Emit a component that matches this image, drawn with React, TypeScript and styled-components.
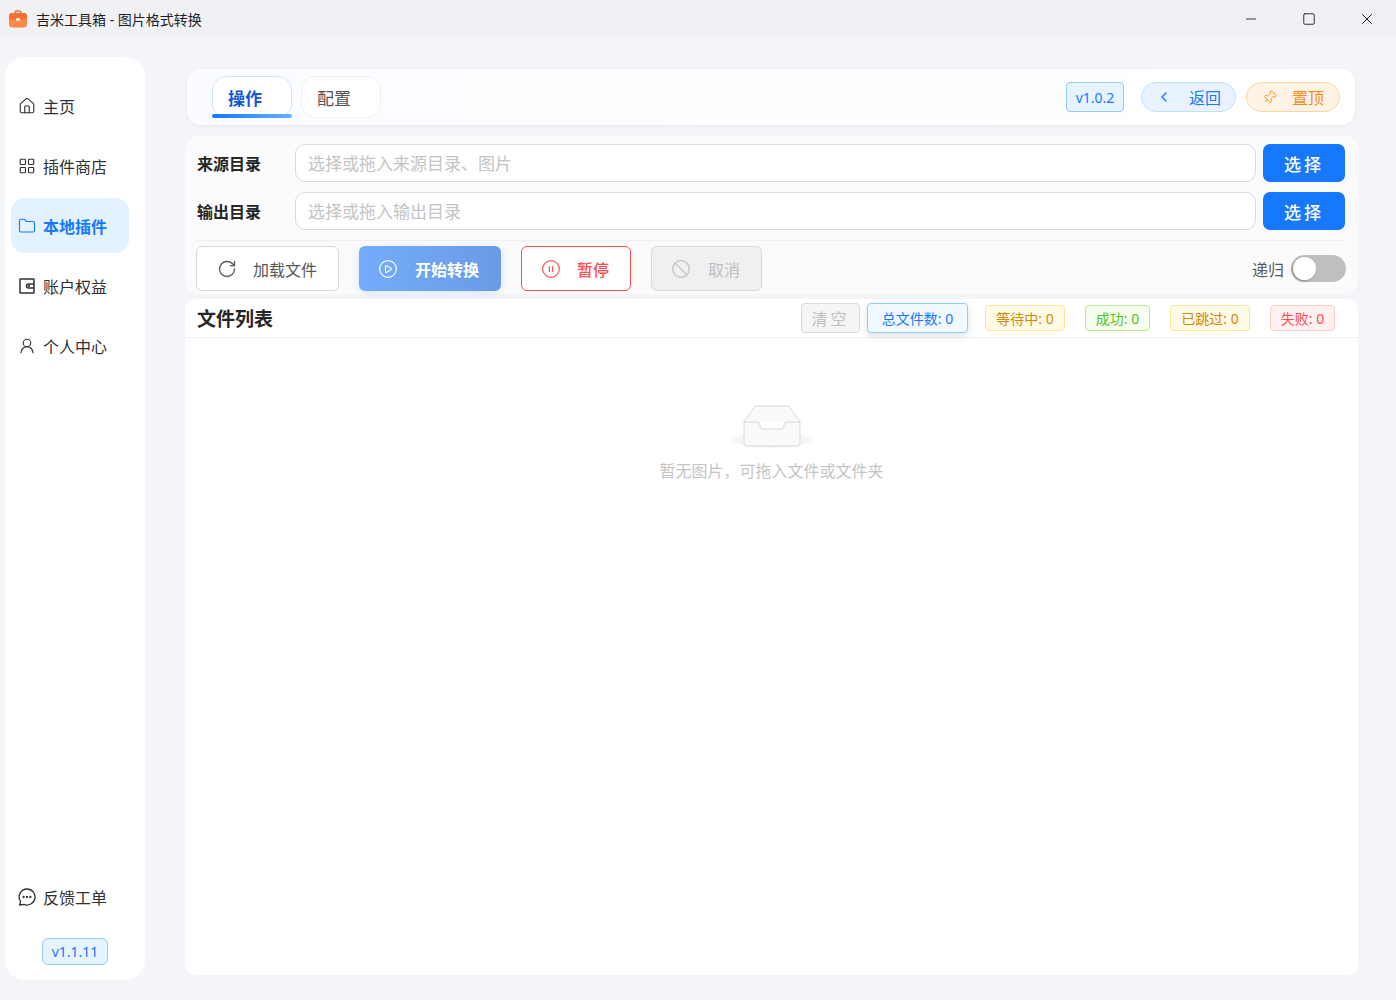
import React from 'react';
import styled, { createGlobalStyle, css } from 'styled-components';
import {
    Ban,
    ChevronLeft,
    CirclePause,
    CirclePlay,
    Folder,
    House,
    LayoutGrid,
    Minus,
    Pin,
    RotateCw,
    Square,
    UserRound,
    X,
} from 'lucide-react';

const GlobalStyle = createGlobalStyle`
    html, body {
        margin: 0;
        padding: 0;
        background: #f4f5f8;
    }
    body {
        font-family: "Noto Sans", "Noto Sans CJK SC", sans-serif;
        color: #303133;
    }
    * {
        box-sizing: border-box;
    }
`;

const Window = styled.div`
    width: 1396px;
    height: 1000px;
    display: flex;
    flex-direction: column;
    overflow: hidden;
    background: #f4f5f8;
`;

const TitleBar = styled.div`
    height: 37px;
    flex: none;
    display: flex;
    align-items: center;
    padding-left: 9px;
    background: #eff1f5;
`;

const AppTitle = styled.span`
    margin-left: 9px;
    font-size: 14px;
    color: #1f1f1f;
`;

const WindowButtons = styled.div`
    margin-left: auto;
    display: flex;
    align-items: center;
    color: #1a1a1a;
`;

const WindowButton = styled.div`
    width: 58px;
    height: 36px;
    display: flex;
    align-items: center;
    justify-content: center;
`;

const Body = styled.div`
    flex: 1;
    min-height: 0;
    display: flex;
    padding: 20px 38px 20px 5px;
`;

const Sidebar = styled.nav`
    width: 140px;
    flex: none;
    display: flex;
    flex-direction: column;
    padding: 21px 16px 15px 6px;
    border-radius: 20px;
    background: #fff;
`;

const NavItem = styled.div<{ $active?: boolean }>`
    height: 55px;
    margin-bottom: 5px;
    display: flex;
    align-items: center;
    gap: 7px;
    padding-left: 7px;
    border-radius: 14px;
    font-size: 16px;
    color: #303133;
    ${(props) =>
        props.$active &&
        css`
            background: #e4f2ff;
            color: #1677ff;
            font-weight: 700;
        `}
`;

const BottomNav = styled.div`
    margin-top: auto;
    display: flex;
    flex-direction: column;
    align-items: stretch;
`;

const SideVersion = styled.div`
    align-self: center;
    margin: 9px 0 0 10px;
    width: 66px;
    height: 27px;
    display: flex;
    align-items: center;
    justify-content: center;
    border: 1px solid #91caff;
    border-radius: 6px;
    background: #e6f4ff;
    color: #1677ff;
    font-size: 14px;
`;

const Main = styled.main`
    flex: 1;
    min-width: 0;
    margin-left: 40px;
    display: flex;
    flex-direction: column;
`;

const Header = styled.header`
    height: 56px;
    margin: 12px 3px 0 2px;
    flex: none;
    display: flex;
    align-items: center;
    padding: 0 15px 0 25px;
    border-radius: 14px;
    background: linear-gradient(90deg, #fbfcff, #ffffff);
    box-shadow: 0 1px 4px rgba(0, 0, 0, 0.06);
`;

const Tab = styled.div<{ $active?: boolean }>`
    position: relative;
    width: 80px;
    height: 42px;
    margin-right: 9px;
    display: flex;
    align-items: center;
    padding-left: 15px;
    border-radius: 14px;
    font-size: 17px;
    background: #fff;
    border: 1px solid ${(props) => (props.$active ? '#cfe2ff' : '#f0f0f0')};
    color: ${(props) => (props.$active ? '#1558d6' : '#555')};
    font-weight: ${(props) => (props.$active ? 700 : 400)};
    ${(props) =>
        props.$active &&
        css`
            &::after {
                content: '';
                position: absolute;
                left: -1px;
                right: -1px;
                bottom: -1px;
                height: 4px;
                border-radius: 2px;
                background: linear-gradient(90deg, #1677ff, #69b1ff);
            }
        `}
`;

const HeaderRight = styled.div`
    margin-left: auto;
    display: flex;
    align-items: center;
`;

const HeaderVersion = styled.div`
    width: 58px;
    height: 30px;
    margin-right: 17px;
    display: flex;
    align-items: center;
    justify-content: center;
    border: 1px solid #91caff;
    border-radius: 4px;
    background: #e6f4ff;
    color: #1677ff;
    font-size: 14px;
`;

const PillButton = styled.div<{ $tone: 'blue' | 'orange' }>`
    height: 30px;
    display: flex;
    align-items: center;
    border-radius: 15px;
    font-size: 16px;
    ${(props) =>
        props.$tone === 'blue'
            ? css`
                  width: 95px;
                  margin-right: 10px;
                  padding-left: 14px;
                  gap: 17px;
                  border: 1px solid #bfdfff;
                  background: #e8f3ff;
                  color: #1677ff;
              `
            : css`
                  width: 94px;
                  padding-left: 15px;
                  gap: 15px;
                  border: 1px solid #ffd59a;
                  background: #fff3e6;
                  color: #fa8c16;
              `}
`;

const SourceCard = styled.section`
    height: 158px;
    margin-top: 11px;
    flex: none;
    display: flex;
    flex-direction: column;
    padding: 8px 13px 0 12px;
    border-radius: 14px;
    background: #fbfbfb;
`;

const PathRow = styled.div`
    height: 38px;
    margin-bottom: 10px;
    display: flex;
    align-items: center;
`;

const PathLabel = styled.div`
    width: 98px;
    flex: none;
    font-size: 16px;
    font-weight: 700;
    color: #262626;
`;

const PathInput = styled.input`
    flex: 1;
    min-width: 0;
    height: 38px;
    padding: 0 12px;
    border: 1px solid #d9d9d9;
    border-radius: 10px;
    background: #fff;
    outline: none;
    font-family: inherit;
    font-size: 17px;
    &::placeholder {
        color: #c4c4c4;
    }
`;

const SelectButton = styled.button`
    width: 82px;
    height: 38px;
    margin-left: 7px;
    border: none;
    border-radius: 7px;
    background: #1677ff;
    color: #fff;
    font-family: inherit;
    font-size: 17px;
    font-weight: 500;
    letter-spacing: 3px;
`;

const ActionRow = styled.div`
    margin: 0 -1px;
    padding-top: 5px;
    border-top: 1px solid #f0f0f0;
    display: flex;
    align-items: center;
`;

const actionTones = {
    plain: css`
        width: 143px;
        border: 1px solid #d9d9d9;
        background: #fff;
        color: #595959;
        padding-left: 20px;
        gap: 16px;
    `,
    primary: css`
        width: 142px;
        background: linear-gradient(90deg, #74acfb, #6a9be6);
        color: #fff;
        font-weight: 700;
        padding-left: 19px;
        gap: 17px;
        box-shadow: 0 2px 8px rgba(22, 119, 255, 0.16);
    `,
    danger: css`
        width: 110px;
        border: 1px solid #ff4d4f;
        background: #fff;
        color: #ff4d4f;
        font-weight: 500;
        padding-left: 19px;
        gap: 16px;
    `,
    disabled: css`
        width: 111px;
        border: 1px solid #d9d9d9;
        background: #f0f0f0;
        color: #bfbfbf;
        padding-left: 19px;
        gap: 17px;
    `,
};

const ActionButton = styled.div<{ $tone: keyof typeof actionTones }>`
    height: 45px;
    margin-right: 20px;
    display: flex;
    align-items: center;
    border-radius: 6px;
    font-size: 16px;
    ${(props) => actionTones[props.$tone]}
`;

const Recursive = styled.div`
    margin-left: auto;
    display: flex;
    align-items: center;
    gap: 7px;
    font-size: 16px;
    color: #595959;
`;

const Switch = styled.div`
    width: 55px;
    height: 27px;
    padding: 2px;
    border-radius: 14px;
    background: #bfbfbf;
`;

const SwitchThumb = styled.div`
    width: 23px;
    height: 23px;
    border-radius: 50%;
    background: #fff;
    box-shadow: -1px 1px 3px rgba(0, 0, 0, 0.3);
`;

const ListCard = styled.section`
    flex: 1;
    min-height: 0;
    margin-top: 5px;
    margin-bottom: 5px;
    display: flex;
    flex-direction: column;
    border-radius: 10px;
    background: #fff;
`;

const ListHeader = styled.div`
    height: 39px;
    flex: none;
    display: flex;
    align-items: center;
    padding: 0 23px 0 12px;
    border-bottom: 1px solid #f0f0f0;
`;

const ListTitle = styled.h2`
    margin: 0 auto 0 0;
    font-size: 19px;
    font-weight: 700;
    color: #262626;
`;

const ClearButton = styled.div`
    width: 59px;
    height: 30px;
    margin-right: 7px;
    display: flex;
    align-items: center;
    justify-content: center;
    border: 1px solid #d9d9d9;
    border-radius: 4px;
    background: #f5f5f5;
    color: #bfbfbf;
    font-size: 16px;
    letter-spacing: 3px;
`;

const statTones = {
    blue: { color: '#1677ff', border: '#91caff', bg: '#f0f9ff' },
    amber: { color: '#d48806', border: '#ffe58f', bg: '#fffbe6' },
    green: { color: '#52c41a', border: '#b7eb8f', bg: '#f6ffed' },
    red: { color: '#ff4d4f', border: '#ffccc7', bg: '#fff2f0' },
};

const StatTag = styled.div<{ $tone: keyof typeof statTones; $width: number; $raised?: boolean }>`
    width: ${(props) => props.$width}px;
    height: ${(props) => (props.$raised ? 30 : 26)}px;
    margin-left: ${(props) => (props.$raised ? 0 : 20)}px;
    display: flex;
    align-items: center;
    justify-content: center;
    border: 1px solid ${(props) => statTones[props.$tone].border};
    border-radius: 4px;
    background: ${(props) => statTones[props.$tone].bg};
    color: ${(props) => statTones[props.$tone].color};
    font-size: 14px;
    white-space: nowrap;
    ${(props) =>
        props.$raised &&
        css`
            box-shadow: 0 3px 8px rgba(0, 0, 0, 0.12);
            margin-right: -3px;
        `}
`;

const EmptyState = styled.div`
    flex: 1;
    display: flex;
    flex-direction: column;
    align-items: center;
    padding-top: 60px;
`;

const EmptyText = styled.div`
    margin-top: 8px;
    font-size: 16px;
    color: #c4c4c4;
`;

const BriefcaseLogo = () => (
    <svg width="18" height="18" viewBox="0 0 18 18">
        <path d="M6 4V2.5A1.5 1.5 0 0 1 7.5 1h3A1.5 1.5 0 0 1 12 2.5V4" fill="none" stroke="#f0743a" strokeWidth="1.6" />
        <rect x="0" y="3" width="18" height="14.5" rx="3.5" fill="#fb8a4a" />
        <rect x="0" y="3" width="18" height="6.5" rx="3" fill="#f26f36" />
        <rect x="7" y="8" width="4" height="3" rx="1" fill="#ffe3c8" />
    </svg>
);

const WalletIcon = () => (
    <svg width="18" height="18" viewBox="0 0 18 18" fill="none" stroke="currentColor" strokeWidth="1.5">
        <rect x="2" y="2" width="14" height="14" rx="0.5" />
        <path d="M16 7H10.5a2 2 0 0 0 0 4H16" />
        <circle cx="11" cy="9" r="0.4" />
    </svg>
);

const ChatIcon = () => (
    <svg width="18" height="18" viewBox="0 0 18 18" fill="none" stroke="currentColor" strokeWidth="1.3">
        <path d="M9 1a8 8 0 1 1-3 15.4L1.6 17l1-3.4A8 8 0 0 1 9 1Z" strokeLinejoin="round" />
        <circle cx="5.6" cy="9" r="0.5" fill="currentColor" />
        <circle cx="9" cy="9" r="0.5" fill="currentColor" />
        <circle cx="12.4" cy="9" r="0.5" fill="currentColor" />
    </svg>
);

const EmptyInbox = () => (
    <svg width="80" height="52" viewBox="0 0 80 52" fill="none">
        <ellipse cx="40" cy="42" rx="39" ry="8" fill="#f5f5f5" />
        <path d="M12 24 23 8h34l11 16v21a3 3 0 0 1-3 3H15a3 3 0 0 1-3-3Z" fill="#fafafa" stroke="#d9d9d9" />
        <path
            d="M12 24h13a3 3 0 0 1 3 3v1a3 3 0 0 0 3 3h18a3 3 0 0 0 3-3v-1a3 3 0 0 1 3-3h13"
            fill="#fff"
            stroke="#d9d9d9"
        />
    </svg>
);

const App = () => (
    <Window>
        <GlobalStyle />
        <TitleBar>
            <BriefcaseLogo />
            <AppTitle>吉米工具箱 - 图片格式转换</AppTitle>
            <WindowButtons>
                <WindowButton>
                    <Minus size={16} strokeWidth={1.3} />
                </WindowButton>
                <WindowButton>
                    <Square size={14} strokeWidth={1.5} />
                </WindowButton>
                <WindowButton>
                    <X size={18} strokeWidth={1.3} />
                </WindowButton>
            </WindowButtons>
        </TitleBar>
        <Body>
            <Sidebar>
                <NavItem>
                    <House size={18} strokeWidth={1.5} />
                    主页
                </NavItem>
                <NavItem>
                    <LayoutGrid size={18} strokeWidth={1.5} />
                    插件商店
                </NavItem>
                <NavItem $active>
                    <Folder size={18} strokeWidth={1.5} />
                    本地插件
                </NavItem>
                <NavItem>
                    <WalletIcon />
                    账户权益
                </NavItem>
                <NavItem>
                    <UserRound size={18} strokeWidth={1.5} />
                    个人中心
                </NavItem>
                <BottomNav>
                    <NavItem>
                        <ChatIcon />
                        反馈工单
                    </NavItem>
                    <SideVersion>v1.1.11</SideVersion>
                </BottomNav>
            </Sidebar>
            <Main>
                <Header>
                    <Tab $active>操作</Tab>
                    <Tab>配置</Tab>
                    <HeaderRight>
                        <HeaderVersion>v1.0.2</HeaderVersion>
                        <PillButton $tone="blue">
                            <ChevronLeft size={16} />
                            返回
                        </PillButton>
                        <PillButton $tone="orange">
                            <Pin size={15} strokeWidth={1.5} style={{ transform: 'rotate(45deg)' }} />
                            置顶
                        </PillButton>
                    </HeaderRight>
                </Header>
                <SourceCard>
                    <PathRow>
                        <PathLabel>来源目录</PathLabel>
                        <PathInput placeholder="选择或拖入来源目录、图片" readOnly />
                        <SelectButton type="button">选择</SelectButton>
                    </PathRow>
                    <PathRow>
                        <PathLabel>输出目录</PathLabel>
                        <PathInput placeholder="选择或拖入输出目录" readOnly />
                        <SelectButton type="button">选择</SelectButton>
                    </PathRow>
                    <ActionRow>
                        <ActionButton $tone="plain">
                            <RotateCw size={20} strokeWidth={1.6} />
                            加载文件
                        </ActionButton>
                        <ActionButton $tone="primary">
                            <CirclePlay size={20} strokeWidth={1.4} />
                            开始转换
                        </ActionButton>
                        <ActionButton $tone="danger">
                            <CirclePause size={20} strokeWidth={1.4} />
                            暂停
                        </ActionButton>
                        <ActionButton $tone="disabled">
                            <Ban size={20} strokeWidth={1.4} />
                            取消
                        </ActionButton>
                        <Recursive>
                            递归
                            <Switch>
                                <SwitchThumb />
                            </Switch>
                        </Recursive>
                    </ActionRow>
                </SourceCard>
                <ListCard>
                    <ListHeader>
                        <ListTitle>文件列表</ListTitle>
                        <ClearButton>清空</ClearButton>
                        <StatTag $tone="blue" $width={101} $raised>
                            总文件数: 0
                        </StatTag>
                        <StatTag $tone="amber" $width={80}>
                            等待中: 0
                        </StatTag>
                        <StatTag $tone="green" $width={65}>
                            成功: 0
                        </StatTag>
                        <StatTag $tone="amber" $width={80}>
                            已跳过: 0
                        </StatTag>
                        <StatTag $tone="red" $width={65}>
                            失败: 0
                        </StatTag>
                    </ListHeader>
                    <EmptyState>
                        <EmptyInbox />
                        <EmptyText>暂无图片，可拖入文件或文件夹</EmptyText>
                    </EmptyState>
                </ListCard>
            </Main>
        </Body>
    </Window>
);

export default App;
